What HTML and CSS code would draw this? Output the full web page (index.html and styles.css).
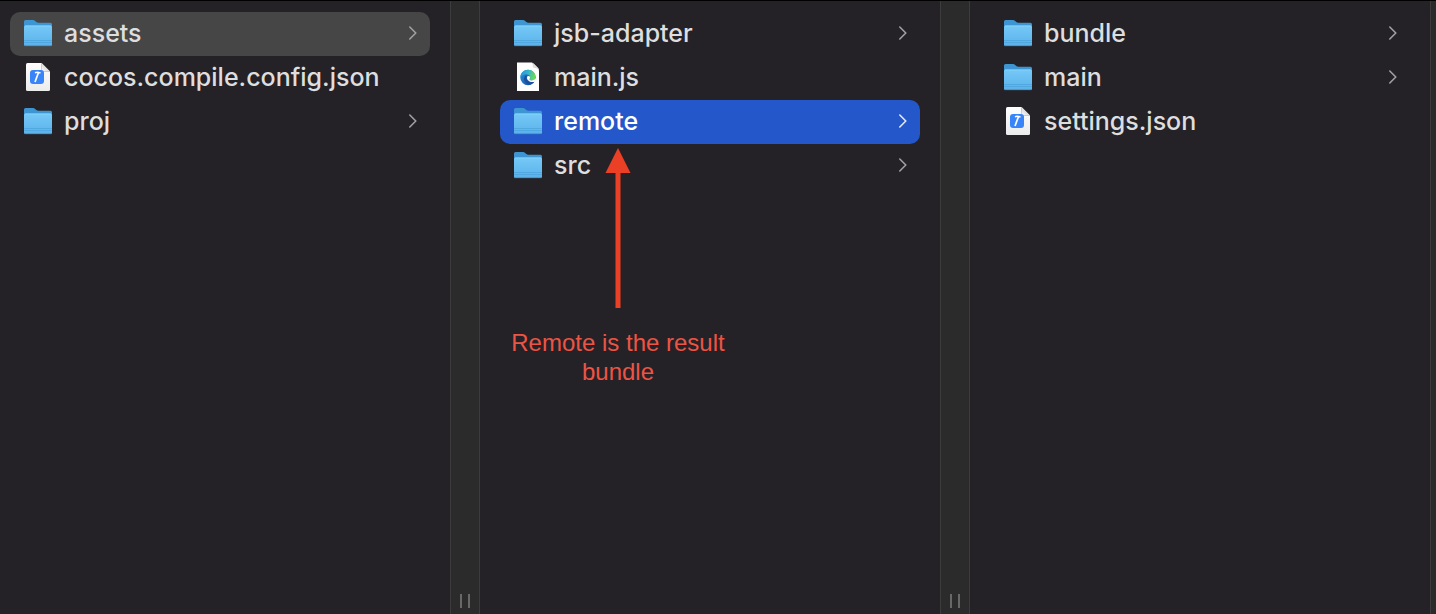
FILE: index.html
```html
<!DOCTYPE html>
<html lang="en">
<head>
<meta charset="utf-8">
<title>assets</title>
<link rel="stylesheet" href="styles.css">
</head>
<body>
<svg class="defs" aria-hidden="true">
  <defs>
    <linearGradient id="folderFront" x1="0" y1="0" x2="0" y2="1">
      <stop offset="0" stop-color="#74c9f8"/>
      <stop offset="1" stop-color="#5cb2e8"/>
    </linearGradient>
    <linearGradient id="page" x1="0" y1="0" x2="0" y2="1">
      <stop offset="0" stop-color="#ffffff"/>
      <stop offset="1" stop-color="#ebebeb"/>
    </linearGradient>
    <linearGradient id="fold" x1="0" y1="1" x2="1" y2="0">
      <stop offset="0" stop-color="#ffffff"/>
      <stop offset="0.6" stop-color="#d4d4d6"/>
    </linearGradient>
    <linearGradient id="edgeTop" x1="0" y1="0" x2="1" y2="0.2">
      <stop offset="0" stop-color="#2590dc"/>
      <stop offset="0.5" stop-color="#32b4cc"/>
      <stop offset="1" stop-color="#6ad95c"/>
    </linearGradient>
    <linearGradient id="edgeLow" x1="0" y1="0" x2="1" y2="1">
      <stop offset="0" stop-color="#2a94e0"/>
      <stop offset="1" stop-color="#174a98"/>
    </linearGradient>
    <symbol id="folder" viewBox="0 0 30 30">
      <path d="M1 27V3.500Q1 2 2.500 2H10Q11.200 2 12.200 3L13.300 4Q14.200 4.800 15.500 4.800H27.500Q29 4.800 29 6.300V27z" fill="#3d95d2"/>
      <path d="M1 9Q1 7.500 2.500 7.500H27.500Q29 7.500 29 9V26.500Q29 28 27.500 28H2.500Q1 28 1 26.500z" fill="url(#folderFront)"/>
      <path d="M2 8H28" stroke="#8ad5fb" stroke-width="0.800"/>
      <path d="M1 22.500H29M1 24.500H29" stroke="#4aa2dc" stroke-width="0.700"/>
      <path d="M1.300 27.700H28.700" stroke="#3e8cc2" stroke-width="0.800"/>
    </symbol>
    <symbol id="json" viewBox="0 0 30 30">
      <path d="M3 2.500Q3 1 4.500 1H18.500L27 9.500V27.500Q27 29 25.500 29H4.500Q3 29 3 27.500z" fill="url(#page)"/>
      <path d="M18.500 1V8Q18.500 9.500 20 9.500H27z" fill="url(#fold)"/>
      <path d="M18.500 1V8Q18.500 9.500 20 9.500H27" fill="none" stroke="#b4b4b8" stroke-width="0.600"/>
      <rect x="7" y="8" width="14" height="14" rx="3" fill="#3a84fa"/>
      <path d="M15.500 10.500L12 20" stroke="#fff" stroke-width="1.700" fill="none"/>
      <path d="M12 10.800Q14 9.800 17.500 11" stroke="#fff" stroke-width="1.500" fill="none"/>
    </symbol>
    <symbol id="edge" viewBox="0 0 30 30">
      <path d="M4 .5H18.500Q20 1 21 2L25 6Q26 7 26 9V29H4z" fill="#fff"/>
      <path d="M18.500 .5Q19.800 2 20 5.500Q24 5.800 26 8Q25.500 6.300 25 6L21 2Q20 .8 18.500 .5z" fill="#dcdcde"/>
      <circle cx="15" cy="15.500" r="7.700" fill="url(#edgeLow)"/>
      <path d="M7.300 15.500C7.300 11 11 7.800 15 7.800C19.500 7.800 22.700 11.300 22.700 14.500C22.700 17.500 20 18.500 18 18.400C16.500 18.300 16.200 17.500 16.700 16.700C17.800 14.500 16.500 12.500 13.700 12.300C11 12 8.500 13.500 7.300 15.500z" fill="url(#edgeTop)"/>
      <path d="M12.500 13.500Q9.800 16.500 12 20Q13.500 22.300 16.500 22.800Q20.500 22 21.800 19.300Q17.500 21.200 14.800 18.800Q12.400 16.500 14.200 13.700z" fill="#1b509f"/>
      <path d="M14.500 14.200Q16.300 13.300 17.100 15Q17 16.200 16.700 16.700C16.200 17.700 16.800 18.400 18.500 18.400Q21 18.200 23 16.200V17.500Q22.700 19 21.800 19.700Q18.500 20.700 16.200 19.200Q12.800 16.800 14.500 14.200z" fill="#fff"/>
    </symbol>
    <symbol id="chevron" viewBox="0 0 10 14">
      <path d="M1.800 1L7.800 7L1.800 13" fill="none" stroke="currentColor" stroke-width="1.600" stroke-linecap="round" stroke-linejoin="round"/>
    </symbol>
  </defs>
</svg>

<main class="browser">
  <ul class="column column-first">
    <li><button class="row row-open"><svg class="icon"><use href="#folder"/></svg><span class="name">assets</span><svg class="chevron"><use href="#chevron"/></svg></button></li>
    <li><button class="row"><svg class="icon"><use href="#json"/></svg><span class="name">cocos.compile.config.json</span></button></li>
    <li><button class="row"><svg class="icon"><use href="#folder"/></svg><span class="name">proj</span><svg class="chevron"><use href="#chevron"/></svg></button></li>
  </ul>
  <div class="divider"><span class="grip"></span></div>
  <div class="pane">
    <ul class="column">
      <li><button class="row"><svg class="icon"><use href="#folder"/></svg><span class="name">jsb-adapter</span><svg class="chevron"><use href="#chevron"/></svg></button></li>
      <li><button class="row"><svg class="icon"><use href="#edge"/></svg><span class="name">main.js</span></button></li>
      <li><button class="row row-selected"><svg class="icon"><use href="#folder"/></svg><span class="name">remote</span><svg class="chevron"><use href="#chevron"/></svg></button></li>
      <li><button class="row"><svg class="icon"><use href="#folder"/></svg><span class="name">src</span><svg class="chevron"><use href="#chevron"/></svg></button></li>
    </ul>
    <div class="note">
      <svg class="arrow" viewBox="0 0 26 160" aria-hidden="true"><path d="M13 0L25.500 25H15.500V160H10.500V25H.5z" fill="#eb4025"/></svg>
      <p class="note-text">Remote is the result bundle</p>
    </div>
  </div>
  <div class="divider"><span class="grip"></span></div>
  <ul class="column">
    <li><button class="row"><svg class="icon"><use href="#folder"/></svg><span class="name">bundle</span><svg class="chevron"><use href="#chevron"/></svg></button></li>
    <li><button class="row"><svg class="icon"><use href="#folder"/></svg><span class="name">main</span><svg class="chevron"><use href="#chevron"/></svg></button></li>
    <li><button class="row"><svg class="icon"><use href="#json"/></svg><span class="name">settings.json</span></button></li>
  </ul>
  <div class="divider"></div>
</main>
</body>
</html>
```
FILE: styles.css
```css
* {
  box-sizing: border-box;
}

body {
  margin: 0;
  background: #242227;
  color: #dededf;
  font-family: Inter, "Liberation Sans", sans-serif;
}

.defs {
  position: absolute;
  width: 0;
  height: 0;
}

.browser {
  display: grid;
  grid-template-columns: 450fr 30px 460fr 30px 460fr 6px;
  min-height: 100vh;
  border-top: 1px solid #000;
  overflow: hidden;
}

.column {
  min-width: 0;
  margin: 0;
  padding: 11px 20px;
  list-style: none;
}

.column-first {
  padding-left: 10px;
}

.pane {
  position: relative;
  min-width: 0;
}

.row {
  display: flex;
  align-items: center;
  gap: 11px;
  width: 100%;
  height: 44px;
  padding: 0 12px 2px 13px;
  border: 0;
  border-radius: 10px;
  background: none;
  color: inherit;
  font: inherit;
  font-size: 25px;
  font-weight: 500;
  line-height: 32px;
  text-align: left;
}

.row-open {
  background: #464646;
}

.row-selected {
  background: #2457ca;
  color: #fff;
}

.icon {
  flex: none;
  width: 30px;
  height: 30px;
}

.name {
  flex: 1;
  min-width: 0;
  white-space: nowrap;
}

.chevron {
  flex: none;
  width: 10px;
  height: 14px;
  color: #a0a0a2;
}

.row-selected .chevron {
  color: #e4eafa;
}

.divider {
  display: flex;
  align-items: flex-end;
  justify-content: center;
  padding-bottom: 6px;
  border: solid #3d3c3d;
  border-width: 0 1px;
  background: #2b2b2b;
}

.divider:last-child {
  border-right: 0;
}

.grip {
  width: 10px;
  height: 14px;
  border: solid #686868;
  border-width: 0 2px;
}

.note {
  position: absolute;
  top: 147px;
  left: 18px;
  display: flex;
  flex-direction: column;
  align-items: center;
  gap: 20px;
  width: 240px;
}

.arrow {
  width: 26px;
  height: 160px;
}

.note-text {
  margin: 0;
  color: #ec5444;
  font-family: "Liberation Sans", Arial, sans-serif;
  font-size: 24px;
  line-height: 29px;
  text-align: center;
}
```
